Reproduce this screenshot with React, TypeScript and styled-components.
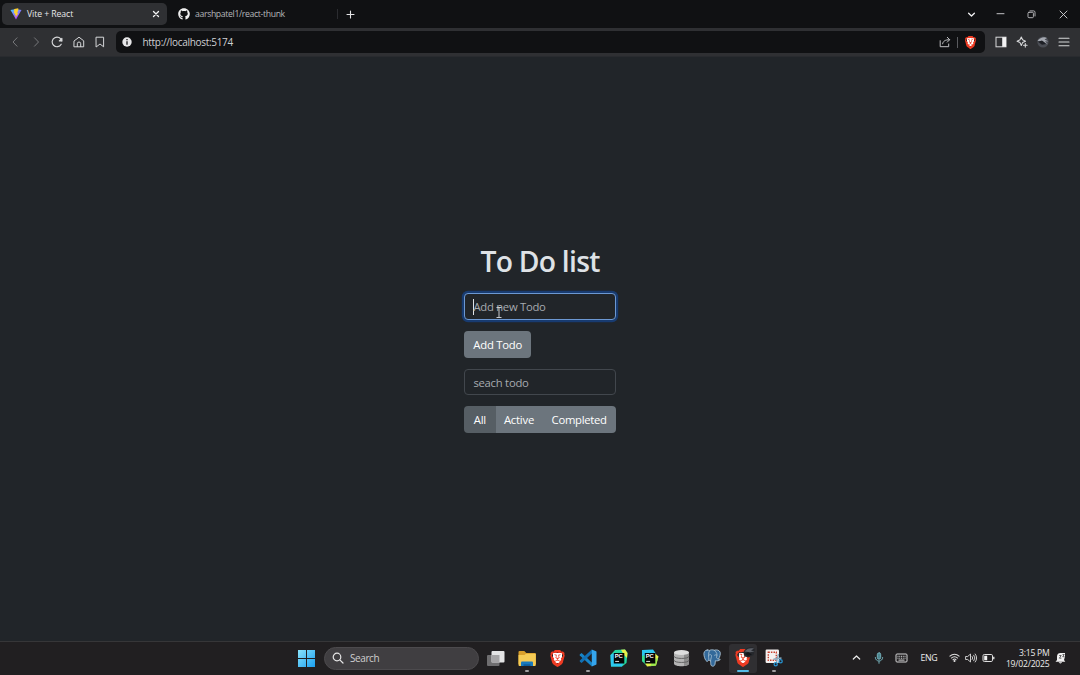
import React from 'react';
import styled, { createGlobalStyle } from 'styled-components';
import { FaGithub } from 'react-icons/fa';
import { SiBrave } from 'react-icons/si';

const GlobalStyle = createGlobalStyle`
  * { box-sizing: border-box; }
  html, body { margin: 0; background: #212529; }
  body { font-family: "Open Sans", "Noto Sans", sans-serif; overflow: hidden; }
  svg { display: block; flex: none; }
  button, input { font-family: inherit; margin: 0; }
`;

const Screen = styled.div`
  width: 1080px;
  height: 675px;
  display: flex;
  flex-direction: column;
  position: relative;
`;

const Label = styled.span<{ $size: number; $spacing?: number; $color?: string; $weight?: number }>`
  font-size: ${p => p.$size}px;
  letter-spacing: ${p => p.$spacing ?? 0}px;
  color: ${p => p.$color ?? 'inherit'};
  font-weight: ${p => p.$weight ?? 400};
  white-space: nowrap;
  line-height: 1.2;
`;

/* Browser chrome */

const TabStrip = styled.div`
  height: 28px;
  background: #101113;
  display: flex;
  align-items: center;
  padding-left: 2px;
`;

const Tab = styled.div<{ $active?: boolean }>`
  width: ${p => (p.$active ? 165 : 170)}px;
  height: 22px;
  border-radius: 5px;
  background: ${p => (p.$active ? '#2f3033' : 'transparent')};
  color: ${p => (p.$active ? '#e8e8ea' : '#b4b5b9')};
  display: flex;
  align-items: center;
  gap: 5px;
  padding: 0 7px 0 ${p => (p.$active ? 8 : 11)}px;
`;

const Push = styled.div`
  margin-left: auto;
`;

const Divider = styled.div<{ $height: number; $color: string }>`
  width: 1px;
  height: ${p => p.$height}px;
  background: ${p => p.$color};
`;

const NewTab = styled.div`
  padding-left: 8px;
`;

const WindowControls = styled.div`
  margin-left: auto;
  display: flex;
  align-items: center;
  padding-right: 12px;
  svg:nth-child(1) { margin-right: 20px; }
  svg:nth-child(2) { margin-right: 22px; }
  svg:nth-child(3) { margin-right: 23.5px; }
`;

const Toolbar = styled.div`
  height: 29px;
  background: #2f3033;
  border-bottom: 1px solid #292b2f;
  display: flex;
  align-items: center;
  padding: 0 10px 0 9px;
`;

const NavButtons = styled.div`
  display: flex;
  width: 107px;
  gap: 9.2px;
`;

const AddressBar = styled.div`
  width: 869px;
  height: 22px;
  border-radius: 5px;
  background: #101113;
  display: flex;
  align-items: center;
  padding: 0 8px 0 6px;
  gap: 10.5px;
`;

const AddressActions = styled.div`
  margin-left: auto;
  display: flex;
  align-items: center;
  gap: 6px;
`;

const ToolbarIcons = styled.div`
  margin-left: auto;
  display: flex;
  align-items: center;
  gap: 9px;
`;

/* Page */

const Page = styled.main`
  height: 584px;
  display: flex;
  flex-direction: column;
  align-items: center;
  padding-top: 184px;
`;

const Title = styled.h1`
  margin: 0 0 12.4px;
  height: 40px;
  display: flex;
  align-items: center;
  color: #dee2e6;
  font-size: 28.3px;
  font-weight: 600;
  letter-spacing: -0.75px;
  white-space: nowrap;
`;

const Form = styled.div`
  width: 151.6px;
  display: flex;
  flex-direction: column;
  align-items: flex-start;
  gap: 11.1px;
`;

const Field = styled.div<{ $focused?: boolean }>`
  width: 151.6px;
  height: 26.6px;
  border-radius: 4px;
  background: #212529;
  border: 1px solid ${p => (p.$focused ? '#6c98d2' : '#42474d')};
  box-shadow: ${p => (p.$focused ? '0 0 0 2.2px #183b70' : 'none')};
  padding: ${p => (p.$focused ? 0 : 0.6)}px 8.2px 0;
  display: flex;
  align-items: center;
`;

const Caret = styled.i`
  width: 1px;
  height: 16px;
  margin-right: -1px;
  background: #dee2e6;
`;

const Button = styled.button<{ $width: number; $pressed?: boolean }>`
  width: ${p => p.$width}px;
  height: 26.6px;
  padding: 0;
  border: 0;
  border-radius: 4px;
  background: ${p => (p.$pressed ? '#565e64' : '#6c757d')};
  color: #fff;
  display: flex;
  align-items: center;
  justify-content: center;
`;

const ButtonGroup = styled.div`
  display: flex;
  border-radius: 4px;
  overflow: hidden;
  ${Button} { border-radius: 0; }
`;

/* Taskbar */

const Taskbar = styled.footer`
  height: 34px;
  background: #211f21;
  border-top: 1px solid #363638;
  display: flex;
  align-items: center;
  padding-left: 298px;
  padding-right: 14px;
  padding-bottom: 1px;
`;

const SearchBox = styled.div`
  width: 154.5px;
  height: 23px;
  margin: 0 1.8px 0 9px;
  border-radius: 12px;
  background: #403e41;
  border: 1px solid #4c4a4d;
  display: flex;
  align-items: center;
  padding-left: 6.5px;
  gap: 6.5px;
`;

const TaskButton = styled.div<{ $active?: boolean }>`
  width: 28px;
  height: 29px;
  margin: 0 1.46px;
  border-radius: 3px;
  background: ${p => (p.$active ? '#302f32' : 'transparent')};
  display: flex;
  align-items: center;
  justify-content: center;
  position: relative;
`;

const Running = styled.i<{ $active?: boolean }>`
  position: absolute;
  bottom: 1px;
  left: 50%;
  width: ${p => (p.$active ? 12 : 4)}px;
  height: 2px;
  border-radius: 1px;
  transform: translateX(-50%);
  background: ${p => (p.$active ? '#55bce8' : '#a09fa1')};
`;

const AvatarBadge = styled.div`
  position: absolute;
  top: 2px;
  right: 2px;
`;

const Tray = styled.div`
  margin-left: auto;
  display: flex;
  align-items: center;
  color: #ececec;
`;

const TrayGroup = styled.div<{ $left: number }>`
  display: flex;
  align-items: center;
  gap: 5px;
  margin-left: ${p => p.$left}px;
`;

const Clock = styled.div`
  width: 46px;
  margin-left: 8.5px;
  margin-right: 5.5px;
  padding-top: 1px;
  display: flex;
  flex-direction: column;
  align-items: flex-end;
  gap: 0.8px;
`;

const Pointer = styled.div`
  position: absolute;
  left: 496px;
  top: 307px;
`;

const BraveWrap = styled.span<{ $size: number }>`
  display: block;
  position: relative;
  color: #ee3b23;
  &::before {
    content: '';
    position: absolute;
    inset: 20% 26% 22%;
    background: #fff;
  }
  svg {
    position: relative;
    width: ${p => p.$size}px;
    height: ${p => p.$size}px;
  }
`;

const BraveGlyph = ({ size }: { size: number }) => (
  <BraveWrap $size={size}><SiBrave /></BraveWrap>
);

type LineProps = { size: number; box?: number; width?: number; color?: string; children: React.ReactNode };
const Line = ({ size, box = 12, width = 1, color = '#d6d7d9', children }: LineProps) => (
  <svg width={size} height={size} viewBox={`0 0 ${box} ${box}`} fill="none" stroke={color}
    strokeWidth={width} strokeLinecap="round" strokeLinejoin="round">{children}</svg>
);

const ViteLogo = () => (
  <svg width="12" height="12" viewBox="0 0 24 24">
    <defs>
      <linearGradient id="vite" x1="0" y1="0" x2="0.6" y2="1">
        <stop offset="0" stopColor="#41d1ff" /><stop offset="1" stopColor="#bd34fe" />
      </linearGradient>
    </defs>
    <path d="M1 4 12.2 2 23 4 12 23Z" fill="url(#vite)" />
    <path d="M16.5 0.5 8.5 2 8 11l2.6-.5-.8 4.2 2-.6-1 5.2 6-9.2-2.6.5 2.3-6Z" fill="#ffd02f" />
  </svg>
);

const PyCharm = ({ flip }: { flip?: boolean }) => (
  <svg width="18" height="18" viewBox="0 0 18 18">
    {flip ? (
      <>
        <path d="M1 1 12 .5 14.5 4 8 14 5 15 1 12Z" fill="#2bc6f0" />
        <path d="M1 7 7 5 8 14.5 5 16 1 12Z" fill="#35dd94" />
        <path d="M13 3.5 17.5 7.5 15 16.5 6 17.5 4 14 12 11Z" fill="#e6f149" />
        <path d="M13 10 17 9 15 16.5 9 17.2Z" fill="#9be84f" />
      </>
    ) : (
      <>
        <path d="M5 1 15 .5 17.5 4 16.5 14 12 17.5 1 17.5 .5 6Z" fill="#25d6a0" />
        <path d="M.5 6 5 3.5 6 14 13 14 12 17.5 1 17.5Z" fill="#2cc8ee" />
        <path d="M11 .7 15 .5 17.5 4 17 9 14 6Z" fill="#e8f04a" />
      </>
    )}
    <rect x="3.8" y="4" width="10.5" height="10.5" fill="#050505" />
    <text x="4.7" y="9.4" fontSize="5.8" fontWeight="700" fontFamily="Liberation Sans, sans-serif" fill="#fff">PC</text>
    <path d="M5.2 12.4h3.9" stroke="#fff" strokeWidth=".9" />
  </svg>
);

const Elephant = () => (
  <svg width="18" height="18" viewBox="0 0 18 18" strokeLinecap="round" strokeLinejoin="round">
    <path d="M4.2 1C1.4 1.3.5 3.6 1 6.3c.5 2.6 1.6 5.5 2.8 6 .9.3 1.5-.6 2.1-1.2.5.5 1.1.6 1.7.6.2 2-.1 4.3.9 5.1 1.2.9 3.1.3 3.5-1.600l.4-3.500c1.900.4 3.600.1 4.900-1.200-.6-.3-1.200-.2-1.800-.3 1.300-2.300 2.200-5.200 1.700-6.900C16.500 1 13.700.5 11.300 1.200 9.200.6 7.600.7 6.600 1.400 5.800 1.100 5 1 4.200 1Z"
      fill="#33699a" stroke="#a9c1d3" strokeWidth=".9" />
    <path d="M6.6 1.6C5.2 3.2 5.4 7 5.9 11M11.3 1.3c2.5 1.5 3.3 4.5 2.3 6.600-.3 1 .3 1.600 1.400 2M6 6c1-.6 2.200-.5 2.500.5.3 1.500-.7 2.600-.9 5M11.600 6.200c1-.6 1.900-.4 2.300.1"
      fill="none" stroke="#a9c1d3" strokeWidth=".8" />
  </svg>
);

export default function App() {
  return (
    <Screen>
      <GlobalStyle />
      <TabStrip>
        <Tab $active>
          <ViteLogo />
          <Label $size={8.7} $spacing={-0.08}>Vite + React</Label>
          <Push>
            <Line size={8} box={8} width={1.3} color="#f4f4f5"><path d="M1.5 1.5 6.5 6.5M6.5 1.5 1.5 6.5" /></Line>
          </Push>
        </Tab>
        <Tab>
          <FaGithub size={12} color="#f0f0f0" />
          <Label $size={8.7} $spacing={-0.36}>aarshpatel1/react-thunk</Label>
        </Tab>
        <Divider $height={10} $color="#2b2c30" />
        <NewTab>
          <Line size={9} box={9} width={1.1} color="#e4e4e6"><path d="M4.5 1v7M1 4.5h7" /></Line>
        </NewTab>
        <WindowControls>
          <Line size={9} box={9} width={1.3} color="#f2f2f3"><path d="M1.6 3.2 4.5 6 7.4 3.2" /></Line>
          <Line size={9} box={9} width={0.9}><path d="M1 3.7h7" /></Line>
          <Line size={9} box={9} width={0.9} color="#bfc0c3">
            <rect x="1" y="2.3" width="5.4" height="5.4" rx="1" /><path d="M3 .9h3.6A1.4 1.4 0 0 1 8 2.3V6" />
          </Line>
          <Line size={9} box={9} width={0.9}><path d="M1 1l7 7M8 1 1 8" /></Line>
        </WindowControls>
      </TabStrip>

      <Toolbar>
        <NavButtons>
          <Line size={12} width={1} color="#77787b"><path d="M8 1.8 4 6l4 4.2" /></Line>
          <Line size={12} width={1} color="#77787b"><path d="M4.5 1.8l4 4.2-4 4.2" /></Line>
          <Line size={12} width={1.15}>
            <path d="M10.2 8.2A4.8 4.8 0 1 1 10.7 5" /><path d="M8.3 4.9h2.6V2.4Z" fill="#d6d7d9" />
          </Line>
          <Line size={12} width={1}>
            <path d="M1.3 4.8 6 1.2l4.7 3.6v6H1.3Z" /><path d="M4.3 10.6V7.7a1.7 1.7 0 0 1 3.4 0v2.9" />
          </Line>
          <Line size={12} width={1}><path d="M2.4 1.2h7.2v9.6L6 8l-3.6 2.8Z" /></Line>
        </NavButtons>
        <AddressBar>
          <svg width="10" height="10" viewBox="0 0 10 10">
            <circle cx="5" cy="5" r="4.7" fill="#e7e7e9" />
            <path d="M5 2.1v1.2M5 4.3v3.5" stroke="#17181a" strokeWidth="1.3" />
          </svg>
          <Label $size={10} $spacing={-0.3} $color="#cfd0d3">http://localhost:5174</Label>
          <AddressActions>
            <Line size={12} width={1} color="#c0c1c4">
              <path d="M1.2 4.7v6h8.5V8" /><path d="M3.6 7.8C4 5.2 6 3.7 10.5 3.7M8.3 1.3l2.4 2.4-2.4 2.4" />
            </Line>
            <Divider $height={11} $color="#5a5b5f" />
            <BraveGlyph size={13} />
          </AddressActions>
        </AddressBar>
        <ToolbarIcons>
          <svg width="12" height="12" viewBox="0 0 12 12">
            <rect x="1" y="1.2" width="10" height="9.6" fill="none" stroke="#d9dadc" />
            <path d="M7.2 1.2H11v9.6H7.2Z" fill="#f3f3f4" />
          </svg>
          <Line size={12} width={1.1}>
            <path d="M5.3 1 6.6 3.8 9.5 5.2 6.6 6.6 5.3 9.5 4 6.6 1.1 5.2 4 3.8Z" />
            <path d="M9.3 7.5v3.6M7.5 9.3h3.6" />
          </Line>
          <svg width="12" height="12" viewBox="0 0 12 12">
            <circle cx="6" cy="6" r="5.6" fill="#4a4d54" />
            <path d="M.5 5C3 1.5 7 .5 10 2L7.5 3.5 11.4 5.5 8 5.2 11 8.500 5.5 5Z" fill="#a4a8b0" />
            <path d="M1 5.8 5 4.5l4 3.5-4 .8Z" fill="#1d1f25" />
          </svg>
          <Line size={12} width={1.1}><path d="M1 2.3h10M1 6h10M1 9.7h10" /></Line>
        </ToolbarIcons>
      </Toolbar>

      <Page>
        <Title>To Do list</Title>
        <Form>
          <Field $focused>
            <Caret />
            <Label $size={11.3} $spacing={-0.28} $color="#a6abb0">Add new Todo</Label>
          </Field>
          <Button $width={67}><Label $size={11.3} $spacing={-0.23}>Add Todo</Label></Button>
          <Field><Label $size={11.3} $spacing={-0.26} $color="#a6abb0">seach todo</Label></Field>
          <ButtonGroup>
            <Button $width={31.3} $pressed><Label $size={11.3} $spacing={-0.15}>All</Label></Button>
            <Button $width={47}><Label $size={11.3} $spacing={-0.2}>Active</Label></Button>
            <Button $width={73.3}><Label $size={11.3} $spacing={-0.3}>Completed</Label></Button>
          </ButtonGroup>
        </Form>
      </Page>

      <Taskbar>
        <svg width="17" height="17" viewBox="0 0 17 17">
          <defs>
            <linearGradient id="win" x1="0" y1="0" x2="1" y2="1">
              <stop offset="0" stopColor="#8be3fb" /><stop offset="1" stopColor="#199ff0" />
            </linearGradient>
          </defs>
          <path d="M0 0h8v8H0ZM9 0h8v8H9ZM0 9h8v8H0ZM9 9h8v8H9Z" fill="url(#win)" />
        </svg>
        <SearchBox>
          <Line size={12} width={1.2} color="#e6e6e6"><circle cx="5" cy="5" r="3.8" /><path d="M7.8 7.8 11 11" /></Line>
          <Label $size={10} $spacing={-0.42} $color="#cfcfd0">Search</Label>
        </SearchBox>
        <TaskButton>
          <svg width="18" height="17" viewBox="0 0 18 17">
            <rect x="0" y="5" width="12.5" height="11" rx="1" fill="#6e6d6f" />
            <rect x="4.5" y="1" width="13" height="11.5" rx="1" fill="#e4e4e5" />
            <path d="M4.5 5h8v7.5h-8Z" fill="#a5a4a6" />
          </svg>
        </TaskButton>
        <TaskButton>
          <svg width="18" height="17" viewBox="0 0 18 17">
            <path d="M.5 2Q.5 1 1.5 1h4.8l2 2H17q.8 0 .8 1v10H.5Z" fill="#d99f2b" />
            <path d="M.5 5h6l1.5-1.3h9.8V15q0 1-1 1H1.5q-1 0-1-1Z" fill="#f5cb55" />
            <path d="M3 16v-3.4q0-1 1-1h10q1 0 1 1V16Z" fill="#1879bd" />
            <path d="M5.5 16v-1.7h7V16Z" fill="#0c5c99" />
          </svg>
          <Running />
        </TaskButton>
        <TaskButton><BraveGlyph size={17} /></TaskButton>
        <TaskButton>
          <svg width="18" height="18" viewBox="0 0 18 18">
            <path d="M1 5.2 2.6 4l10.5 9.8-.3 3.8L.8 6.4q-.5-.6.2-1.2Z" fill="#1684c8" />
            <path d="M1 12.8 2.6 14 13.1 4.2 12.8.4.8 11.6q-.5.6.2 1.2Z" fill="#1270b4" />
            <path d="M12.8.4 17 2.2q.5.2.5.8v12q0 .6-.5.8l-4.2 1.8Z" fill="#35a5ed" />
          </svg>
          <Running />
        </TaskButton>
        <TaskButton><PyCharm /></TaskButton>
        <TaskButton><PyCharm flip /></TaskButton>
        <TaskButton>
          <svg width="17" height="18" viewBox="0 0 17 18">
            <path d="M1 3.5v11c0 3.7 15 3.7 15 0v-11Z" fill="#b5b5b5" />
            <path d="M11 3v14c3-.3 5-1.3 5-2.5v-11Z" fill="#8d8d8d" />
            <ellipse cx="8.5" cy="3.4" rx="7.5" ry="2.5" fill="#dedede" />
            <path d="M1 7.2c0 3 15 3 15 0M1 11.2c0 3 15 3 15 0" fill="none" stroke="#5b5b5b" strokeWidth=".9" />
          </svg>
        </TaskButton>
        <TaskButton><Elephant /></TaskButton>
        <TaskButton $active>
          <BraveGlyph size={18} />
          <AvatarBadge>
            <svg width="12" height="12" viewBox="0 0 12 12">
              <path d="M.5 7C1 3 5 .5 9.5 1L12 3.5 10.5 9 6 11.5 1.5 10.5Z" fill="#25272c" />
              <path d="M1.5 5.5C4 2.5 7 1.5 11 2.5L8 4.5l3.5 1-4.5.8Z" fill="#5d6068" />
              <path d="M2 8 5 6l4 2.500-4 1.500Z" fill="#141519" />
            </svg>
          </AvatarBadge>
          <Running $active />
        </TaskButton>
        <TaskButton>
          <svg width="18" height="18" viewBox="0 0 18 18">
            <rect x=".6" y=".6" width="13.4" height="13.4" rx="1.2" fill="#f3f0ef" />
            <rect x="3.3" y="3.3" width="8" height="8" fill="none" stroke="#c8402f" strokeWidth="1.4" strokeDasharray="1.5 1.1" />
            <path d="M8.5 10.2 16.5 9M11.3 14 13.5 5" stroke="#8aa9bd" strokeWidth="1.4" />
            <circle cx="10.7" cy="15.3" r="1.6" fill="#211f21" stroke="#2793d1" strokeWidth="1.3" />
            <circle cx="15.6" cy="12.2" r="1.6" fill="#211f21" stroke="#2793d1" strokeWidth="1.3" />
          </svg>
          <Running />
        </TaskButton>

        <Tray>
          <Line size={9} box={9} width={1.2} color="#ececec"><path d="M1.3 6 4.5 3l3.2 3" /></Line>
          <TrayGroup $left={12}>
            <Line size={12} width={1} color="#74aeb8">
              <rect x="4.3" y=".8" width="3.4" height="6.4" rx="1.7" fill="#4d8791" />
              <path d="M2.3 5.5c0 4.8 7.4 4.8 7.4 0M6 9.3v2" />
            </Line>
          </TrayGroup>
          <TrayGroup $left={10}>
            <svg width="13" height="12" viewBox="0 0 13 12" fill="none" stroke="#d5d5d6">
              <rect x="1" y="2" width="11" height="8" rx="1" />
              <path d="M2.5 4.3h8M2.5 6.2h8" strokeDasharray="1 .75" /><path d="M3.5 8.1h6" />
            </svg>
          </TrayGroup>
          <TrayGroup $left={12}><Label $size={8.8} $spacing={-0.3}>ENG</Label></TrayGroup>
          <TrayGroup $left={11.6}>
            <Line size={11} width={1.1} color="#dedede">
              <path d="M1 4.6c3-3 7-3 10 0M2.6 6.6c2-2 4.8-2 6.8 0M4.3 8.5c1-1 2.4-1 3.4 0" />
              <circle cx="6" cy="9.8" r=".6" fill="#fff" />
            </Line>
            <Line size={12} width={0.9} color="#dedede">
              <path d="M1 4.5h1.7L5.5 2v8L2.7 7.5H1ZM7.2 4.5q1.3 1.5 0 3M8.8 3.2q2.4 2.8 0 5.6M10.2 2q3 4 0 8" />
            </Line>
            <svg width="13" height="12" viewBox="0 0 13 12">
              <rect x="1" y="2.5" width="9.5" height="7" rx="1.3" fill="none" stroke="#dedede" />
              <path d="M2.2 3.8h3v4.4h-3ZM11.2 4.7h1.2v2.6h-1.2Z" fill="#f5f5f5" />
            </svg>
          </TrayGroup>
          <Clock>
            <Label $size={8.6} $spacing={-0.25}>3:15 PM</Label>
            <Label $size={8.6} $spacing={-0.2}>19/02/2025</Label>
          </Clock>
          <svg width="11" height="12" viewBox="0 0 11 12">
            <path d="M2 8V4.5C2 2 3.5 1 5.5 1H10v3.5L9 8l1.3 1.7H.5ZM3.7 10.3h3.4c-.5 1.5-2.9 1.5-3.4 0Z" fill="#f1f1f1" />
            <path d="M4.2 3.5h2L4.4 6.2h2M7.5 2.5h1.8L7.7 4.7h1.8" fill="none" stroke="#2b292c" strokeWidth=".7" />
          </svg>
        </Tray>
      </Taskbar>

      <Pointer>
        <svg width="6" height="11" viewBox="0 0 6 11" fill="none" stroke="#c8cbce">
          <path d="M.5.5h5M3 .5v10M.5 10.5h5" />
        </svg>
      </Pointer>
    </Screen>
  );
}
